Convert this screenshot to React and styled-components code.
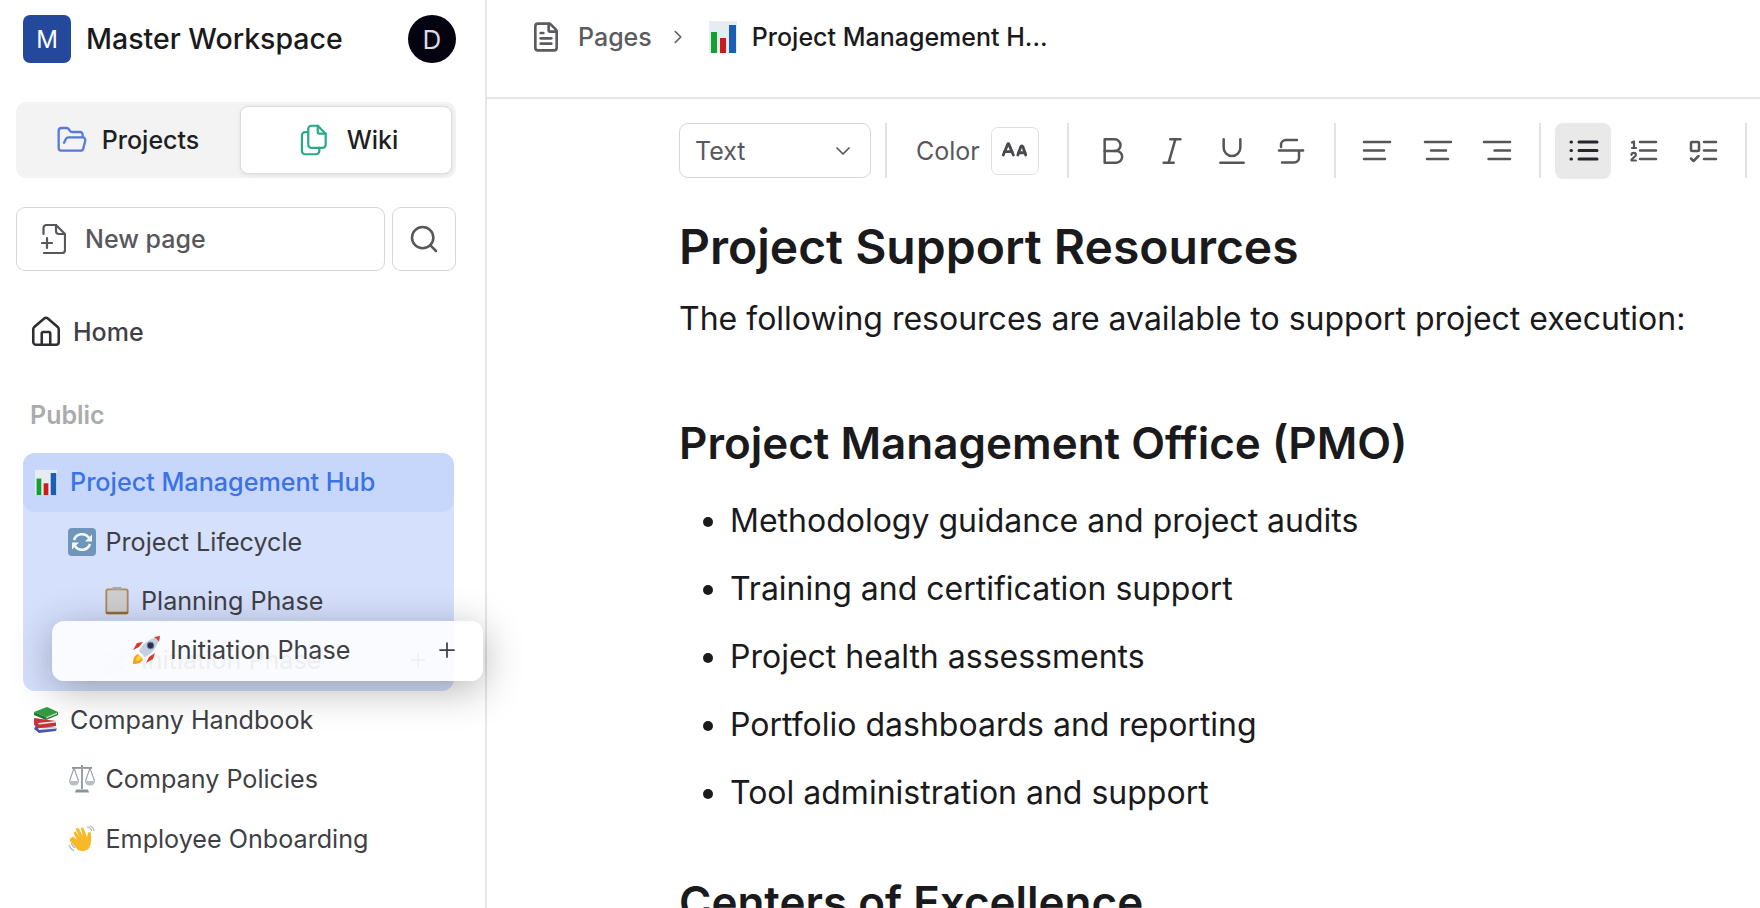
import React from 'react';
import styled, { createGlobalStyle } from 'styled-components';
import { ALargeSmall, ChevronDown, ChevronRight, FileText, FolderOpen, House, Plus, Search } from 'lucide-react';
import { TbBold, TbFiles, TbItalic, TbUnderline } from 'react-icons/tb';

const GlobalStyle = createGlobalStyle`
  html, body {
    margin: 0;
    height: 100%;
    background: #fff;
    overflow: hidden;
  }
  body {
    font-family: Inter, "Liberation Sans", sans-serif;
    color: #18181b;
  }
`;

const ChartEmoji = ({ width = 22, height = 27 }) => (
  <svg width={width} height={height} viewBox="0 0 28 32">
    <rect width="28" height="32" fill="#e6ecf2" />
    <rect x="2" y="11" width="6" height="21" fill="#12a12e" />
    <rect x="11" y="17" width="6" height="15" fill="#c91c1c" />
    <rect x="20" y="4" width="7" height="28" fill="#1a5fb4" />
  </svg>
);

const CycleEmoji = () => (
  <svg width="28" height="28" viewBox="0 0 28 28">
    <rect width="28" height="28" rx="4" fill="#6d96ba" />
    <path d="M6 12a8.4 8.4 0 0 1 15-2" fill="none" stroke="#f4f7fa" strokeWidth="2.6" />
    <path d="M24 6.5v7h-7z" fill="#f4f7fa" />
    <path d="M22 16a8.4 8.4 0 0 1-15 2" fill="none" stroke="#f4f7fa" strokeWidth="2.6" />
    <path d="M4 21.5v-7h7z" fill="#f4f7fa" />
  </svg>
);

const ClipboardEmoji = () => (
  <svg width="26" height="29" viewBox="0 0 28 30">
    <rect x="2.5" y="3" width="23" height="26" rx="2" fill="#cfcfd0" stroke="#b08a57" strokeWidth="2" />
    <rect x="9" y="0.5" width="10" height="3" rx="1" fill="#a9a9a9" />
    <rect x="2" y="27" width="24" height="2.5" rx="1" fill="#8f6c3e" />
  </svg>
);

const RocketEmoji = ({ ghost }) => (
  <svg width="28" height="28" viewBox="0 0 28 28" opacity={ghost ? 0.7 : 1}>
    <path d="M1 28c0-6 2-9 5-10l5 5c-1 3-4 5-10 5z" fill={ghost ? '#c9c9c9' : '#f6a021'} />
    <path d="M4 25c0-3 1-5 3-6l3 3c-1 2-3 3-6 3z" fill={ghost ? '#ddd' : '#f4d33c'} />
    <path d="M7 11l-6 3 4-7 6-1zM17 21l-3 6 7-4 2-6z" fill={ghost ? '#c9c9c9' : '#d93a2b'} />
    <path d="M7 15C10 8 18 2 28 0c-2 10-8 18-15 21z" fill={ghost ? '#d5d5d5' : '#c3d0e4'} />
    <path d="M22 1l6-1-1 6c-1-2-3-4-5-5z" fill={ghost ? '#c9c9c9' : '#d93a2b'} />
    <circle cx="18.5" cy="9.5" r="3.4" fill={ghost ? '#bbb' : '#2a2f45'} stroke={ghost ? '#ccc' : '#6d86ad'} />
  </svg>
);

const BooksEmoji = () => (
  <svg width="26" height="26" viewBox="0 0 26 26">
    <path d="M3 18l20 2 1 1 -1 3-17 2-5-4z" fill="#4b57a8" />
    <path d="M5 21l19-1v1.4L6 23z" fill="#e8e8f0" />
    <path d="M1 11l22 3 0 5-17 2-5-3z" fill="#c8333a" />
    <path d="M5 16l18-2v1.4L6 17.5z" fill="#f0e6e6" />
    <path d="M1 5L14 0l11 5-12 5z" fill="#2f9e3f" />
    <path d="M1 5l12 5 12-5v3l-12 5L1 8z" fill="#1f7a30" />
    <path d="M13 10.4l11-4.6v1.2l-11 4.6z" fill="#e9efe6" />
  </svg>
);

const ScalesEmoji = () => (
  <svg width="28" height="28" viewBox="0 0 28 28">
    <g fill="none" stroke="#9aa0a8" strokeWidth="1.1">
      <path d="M6 3L1.5 16M6 3l4.5 13M22 3l-4.5 13M22 3l4.5 13" />
    </g>
    <path d="M1 16h10c0 3-2 4.5-5 4.5S1 19 1 16zM17 16h10c0 3-2 4.5-5 4.5S17 19 17 16z" fill="#b9bec5" />
    <path d="M4 2h20v1.8H4z" fill="#8d939b" />
    <path d="M13 0h2v24h-2z" fill="#9aa0a8" />
    <path d="M8 24.5h12l1 3H7z" fill="#8d939b" />
  </svg>
);

const WaveEmoji = () => (
  <svg width="28" height="28" viewBox="0 0 28 28">
    <path
      d="M6 12l3 3-3-6c-1-2 1-3 2-2l4 6-4-8c-1-2 2-3 3-1l4 7-2-7c0-2 2-2 3 0l3 8 1-4c1-2 3-1 3 1 0 5 1 9-2 14-3 4-9 4-12 1l-7-8c-1-2 1-4 4-4z"
      fill="#f7b928"
    />
    <path d="M1 20c1 3 3 5 5 6M3 18c1 2 2 4 4 5M19 2c2 0 4 2 5 4M22 1c2 1 4 3 4 5" fill="none" stroke="#a9b2bc" strokeWidth="1.1" />
  </svg>
);

// drawn on the 25x30 box the reference's icon takes up, plus sticks out left of the sheet
const NewPageIcon = () => (
  <svg width="25" height="30" viewBox="0 0 25 30" fill="none" stroke="currentColor" strokeWidth="2.2" strokeLinecap="round" strokeLinejoin="round">
    <path d="M2.5 10V4a3 3 0 0 1 3-3H15l9 9v16a3 3 0 0 1-3 3H3" />
    <path d="M15 1v6a3 3 0 0 0 3 3h6" />
    <path d="M1 19h10M6 14v10" />
  </svg>
);

const ToolIcon = ({ children, strong }) => (
  <svg width="40" height="40" viewBox="0 0 40 40" fill="none" stroke="currentColor" strokeWidth={strong ? 3 : 2.5} strokeLinecap="round" strokeLinejoin="round">
    {children}
  </svg>
);

const StrikeIcon = () => (
  <ToolIcon>
    <path d="M25 9H14c-2.5 0-5 2-5 5v2" />
    <path d="M7 19.5h24" />
    <path d="M27 20v6.5c0 3-2 5-5 5H10" />
  </ToolIcon>
);

const AlignLeftIcon = () => (
  <ToolIcon>
    <path d="M6 11h26M6 19.5h20M6 28h21" />
  </ToolIcon>
);

const AlignCenterIcon = () => (
  <ToolIcon>
    <path d="M7 11h26M13 19.5h15M9 28h21" />
  </ToolIcon>
);

const AlignRightIcon = () => (
  <ToolIcon>
    <path d="M7 11h26M17.5 19.5H33M11.5 28H33" />
  </ToolIcon>
);

const BulletListIcon = () => (
  <ToolIcon strong>
    <path d="M8 11h.5M8 19.5h.5M8 28h.5M16 11h18M16 19.5h18M16 28h18" />
  </ToolIcon>
);

const OrderedListIcon = () => (
  <ToolIcon>
    <path d="M17 11h16M17 19.5h16M17 28h16" />
    <path d="M9 11.5l2-1v6.5M9 17h4M8.5 24a2.2 2.2 0 0 1 4.4 0c0 2-4.4 3-4.4 5.5h4.4" strokeWidth="2.2" />
  </ToolIcon>
);

const CheckListIcon = () => (
  <ToolIcon>
    <rect x="8" y="11" width="8" height="9" rx="1" />
    <path d="M21 11h12M21 19.5h12M21 28h12" />
    <path d="M8 27.5l2.5 2.5 5-5" />
  </ToolIcon>
);

const Page = styled.div`
  display: flex;
  width: 100%;
  height: 908px;
  overflow: hidden;
`;

const Sidebar = styled.aside`
  flex: 0 0 487px;
  box-sizing: border-box;
  height: 100%;
  padding: 15px 0 0;
  border-right: 2px solid #e6e6e6;
`;

const Workspace = styled.div`
  display: flex;
  align-items: center;
  height: 48px;
  margin: 0 29px 0 23px;
`;

const Logo = styled.div`
  display: flex;
  align-items: center;
  justify-content: center;
  width: 48px;
  height: 48px;
  border-radius: 7px;
  background: #24499c;
  color: #fff;
  font-size: 24px;
`;

const WorkspaceName = styled.div`
  flex: 1;
  margin-left: 15px;
  padding-bottom: 2px;
  font-size: 28.5px;
  font-weight: 500;
  color: #1a1a1d;
`;

const Avatar = styled.div`
  display: flex;
  align-items: center;
  justify-content: center;
  width: 48px;
  height: 48px;
  border-radius: 50%;
  background: #05030f;
  color: #d9dbe6;
  font-size: 26px;
`;

const Tabs = styled.div`
  display: flex;
  box-sizing: border-box;
  width: 440px;
  height: 76px;
  margin: 39px 0 0 16px;
  padding: 4px;
  border-radius: 10px;
  background: #f3f3f3;
`;

const Tab = styled.div`
  display: flex;
  align-items: center;
  justify-content: center;
  gap: ${(p) => (p.$active ? '15px' : '14px')};
  flex: ${(p) => (p.$active ? '0 0 212px' : '1')};
  box-sizing: border-box;
  height: 68px;
  padding-right: ${(p) => (p.$active ? 0 : 5)}px;
  border: 1px solid ${(p) => (p.$active ? '#dcdcdc' : 'transparent')};
  border-radius: 8px;
  background: ${(p) => (p.$active ? '#fff' : 'transparent')};
  box-shadow: ${(p) => (p.$active ? '0 1px 4px rgba(0,0,0,.08)' : 'none')};
  font-size: 25px;
  font-weight: 500;
  color: #1f1f22;
`;

const Actions = styled.div`
  display: flex;
  gap: 7px;
  width: 440px;
  margin: 29px 0 0 16px;
`;

const NewPage = styled.div`
  display: flex;
  align-items: center;
  gap: 19px;
  flex: 1;
  box-sizing: border-box;
  height: 64px;
  padding-left: 24px;
  border: 1px solid #d6d6d6;
  border-radius: 9px;
  font-size: 25px;
  font-weight: 500;
  color: #58585c;
`;

const SearchButton = styled.div`
  display: flex;
  align-items: center;
  justify-content: center;
  box-sizing: border-box;
  width: 64px;
  height: 64px;
  border: 1px solid #d6d6d6;
  border-radius: 9px;
  color: #58585c;
`;

const Home = styled.div`
  display: flex;
  align-items: center;
  gap: 10px;
  height: 60px;
  margin-top: 31px;
  padding-left: 29px;
  font-size: 25px;
  font-weight: 500;
  color: #3f3f46;
`;

const SectionLabel = styled.div`
  height: 30px;
  margin: 38px 0 23px 30px;
  font-size: 25px;
  line-height: 30px;
  font-weight: 600;
  color: #aaabad;
`;

const Group = styled.div`
  position: relative;
  width: 431px;
  margin-left: 23px;
  border-radius: 12px;
  background: #d5e0fd;
`;

const Row = styled.div`
  display: flex;
  align-items: center;
  gap: 10px;
  box-sizing: border-box;
  height: 59.4px;
  padding-bottom: 1px;
  margin-left: ${(p) => (p.$flush ? 23 : 0)}px;
  padding-left: ${(p) => 9 + (p.$level || 0) * 35.5}px;
  border-radius: ${(p) => (p.$selected ? '12px' : '0')};
  background: ${(p) => (p.$selected ? '#c7d7fb' : 'transparent')};
  font-size: 25.15px;
  font-weight: ${(p) => (p.$selected ? 500 : 400)};
  color: ${(p) => (p.$selected ? '#3b72e6' : '#3f3f46')};
  opacity: ${(p) => (p.$ghost ? 0.55 : 1)};
`;

const EmojiSlot = styled.span`
  display: flex;
  flex: 0 0 28px;
  align-items: center;
  justify-content: center;
`;

const RowPlus = styled.span`
  display: flex;
  margin-left: auto;
  margin-right: ${(p) => p.$right}px;
  color: #3f3f46;
`;

const DragOverlay = styled.div`
  position: absolute;
  top: 168px;
  left: 29px;
  width: 431px;
  height: 60px;
  border-radius: 12px;
  background: rgba(255, 255, 255, 0.86);
  box-shadow: 0 8px 40px rgba(0, 0, 0, 0.3);
`;

const Main = styled.main`
  flex: 1;
  min-width: 0;
  height: 100%;
`;

const Breadcrumbs = styled.header`
  display: flex;
  align-items: center;
  box-sizing: border-box;
  height: 99px;
  padding: 0 0 24px 43px;
  border-bottom: 2px solid #e6e6e6;
  font-size: 25px;
`;

const CrumbRoot = styled.span`
  margin-left: 16px;
  font-weight: 500;
  color: #5c5c60;
`;

const CrumbArrow = styled.span`
  display: flex;
  margin: 0 20px 0 15px;
  color: #5c5c60;
`;

const CrumbCurrent = styled.span`
  margin-left: 15px;
  font-weight: 500;
  color: #1a1a1d;
`;

const Toolbar = styled.div`
  display: flex;
  align-items: center;
  gap: 14px;
  height: 55px;
  margin: 24px 0 0 192px;
`;

const Select = styled.div`
  display: flex;
  flex: none;
  align-items: center;
  justify-content: space-between;
  box-sizing: border-box;
  width: 192px;
  height: 55px;
  padding: 0 15px;
  border: 1px solid #d6d6d6;
  border-radius: 9px;
  font-size: 25px;
  color: #58585c;
`;

const Divider = styled.span`
  flex: none;
  width: 2px;
  height: 55px;
  background: #e3e3e3;
`;

const ColorControl = styled.div`
  display: flex;
  flex: none;
  align-items: center;
  gap: 11px;
  margin-left: 15px;
  margin-right: 14px;
  font-size: 25px;
  color: #58585c;
`;

const Swatch = styled.div`
  display: flex;
  align-items: center;
  justify-content: center;
  box-sizing: border-box;
  width: 48px;
  height: 48px;
  border: 1px solid #e0e0e0;
  border-radius: 7px;
  color: #4a4a4e;
`;

const ToolGroup = styled.div`
  display: flex;
  flex: none;
  gap: 3.75px;
  margin-left: ${(p) => p.$lead || 0}px;
`;

const ToolButton = styled.div`
  display: flex;
  align-items: center;
  justify-content: center;
  width: 56px;
  height: 56px;
  border-radius: 8px;
  background: ${(p) => (p.$active ? '#e9e9e9' : 'transparent')};
  color: ${(p) => (p.$active ? '#26262a' : '#56565a')};
  font-size: 40px;
`;

const Article = styled.article`
  margin-left: 192px;
  color: #1a1a1d;
`;

const Heading = styled.h1`
  margin: 44px 0 25px;
  font-size: 48px;
  line-height: 50px;
  font-weight: 600;
`;

const Subheading = styled.h2`
  margin: ${(p) => p.$top}px 0 34px;
  font-size: 44px;
  line-height: 44px;
  font-weight: 600;
`;

const Paragraph = styled.p`
  margin: 0;
  font-size: 32px;
  line-height: 44px;
`;

const Bullets = styled.ul`
  display: flex;
  flex-direction: column;
  gap: 24px;
  margin: 0;
  padding: 0 0 0 51px;
`;

const Bullet = styled.li`
  font-size: 32px;
  line-height: 44px;
`;

const pmoItems = [
  'Methodology guidance and project audits',
  'Training and certification support',
  'Project health assessments',
  'Portfolio dashboards and reporting',
  'Tool administration and support',
];

export default function App() {
  return (
    <Page>
      <GlobalStyle />
      <Sidebar>
        <Workspace>
          <Logo>M</Logo>
          <WorkspaceName>Master Workspace</WorkspaceName>
          <Avatar>D</Avatar>
        </Workspace>

        <Tabs>
          <Tab>
            <FolderOpen size={32} strokeWidth={1.75} color="#5b79d9" />
            Projects
          </Tab>
          <Tab $active>
            <TbFiles size={38} strokeWidth={1.4} color="#2aa98a" />
            Wiki
          </Tab>
        </Tabs>

        <Actions>
          <NewPage>
            <NewPageIcon />
            New page
          </NewPage>
          <SearchButton>
            <Search size={32} strokeWidth={1.9} />
          </SearchButton>
        </Actions>

        <Home>
          <House size={34} strokeWidth={1.8} color="#2f2f33" />
          Home
        </Home>

        <SectionLabel>Public</SectionLabel>

        <Group>
          <Row $selected>
            <EmojiSlot><ChartEmoji /></EmojiSlot>
            Project Management Hub
          </Row>
          <Row $level={1}>
            <EmojiSlot><CycleEmoji /></EmojiSlot>
            Project Lifecycle
          </Row>
          <Row $level={2}>
            <EmojiSlot><ClipboardEmoji /></EmojiSlot>
            Planning Phase
          </Row>
          <Row $level={2} $ghost>
            <EmojiSlot><RocketEmoji ghost /></EmojiSlot>
            Initiation Phase
            <RowPlus $right={25}>
              <Plus size={22} strokeWidth={1.5} />
            </RowPlus>
          </Row>
          <DragOverlay>
            <Row $level={2}>
              <EmojiSlot><RocketEmoji /></EmojiSlot>
              Initiation Phase
              <RowPlus $right={24}>
                <Plus size={24} strokeWidth={1.75} />
              </RowPlus>
            </Row>
          </DragOverlay>
        </Group>

        <Row $flush>
          <EmojiSlot><BooksEmoji /></EmojiSlot>
          Company Handbook
        </Row>
        <Row $flush $level={1}>
          <EmojiSlot><ScalesEmoji /></EmojiSlot>
          Company Policies
        </Row>
        <Row $flush $level={1}>
          <EmojiSlot><WaveEmoji /></EmojiSlot>
          Employee Onboarding
        </Row>
      </Sidebar>

      <Main>
        <Breadcrumbs>
          <FileText size={32} strokeWidth={2} color="#5c5c60" />
          <CrumbRoot>Pages</CrumbRoot>
          <CrumbArrow>
            <ChevronRight size={22} strokeWidth={1.75} />
          </CrumbArrow>
          <ChartEmoji width={28} height={32} />
          <CrumbCurrent>Project Management H...</CrumbCurrent>
        </Breadcrumbs>

        <Toolbar>
          <Select>
            Text
            <ChevronDown size={24} strokeWidth={1.75} />
          </Select>
          <Divider />
          <ColorControl>
            Color
            <Swatch>
              <ALargeSmall size={27} strokeWidth={2.5} />
            </Swatch>
          </ColorControl>
          <Divider />
          <ToolGroup $lead={2}>
            <ToolButton><TbBold strokeWidth={1.5} /></ToolButton>
            <ToolButton><TbItalic strokeWidth={1.5} /></ToolButton>
            <ToolButton><TbUnderline strokeWidth={1.5} /></ToolButton>
            <ToolButton><StrikeIcon /></ToolButton>
          </ToolGroup>
          <Divider />
          <ToolGroup>
            <ToolButton><AlignLeftIcon /></ToolButton>
            <ToolButton><AlignCenterIcon /></ToolButton>
            <ToolButton><AlignRightIcon /></ToolButton>
          </ToolGroup>
          <Divider />
          <ToolGroup>
            <ToolButton $active><BulletListIcon /></ToolButton>
            <ToolButton><OrderedListIcon /></ToolButton>
            <ToolButton><CheckListIcon /></ToolButton>
          </ToolGroup>
          <Divider />
        </Toolbar>

        <Article>
          <Heading>Project Support Resources</Heading>
          <Paragraph>The following resources are available to support project execution:</Paragraph>
          <Subheading $top={80}>Project Management Office (PMO)</Subheading>
          <Bullets>
            {pmoItems.map((item) => (
              <Bullet key={item}>{item}</Bullet>
            ))}
          </Bullets>
          <Subheading $top={65}>Centers of Excellence</Subheading>
        </Article>
      </Main>
    </Page>
  );
}
